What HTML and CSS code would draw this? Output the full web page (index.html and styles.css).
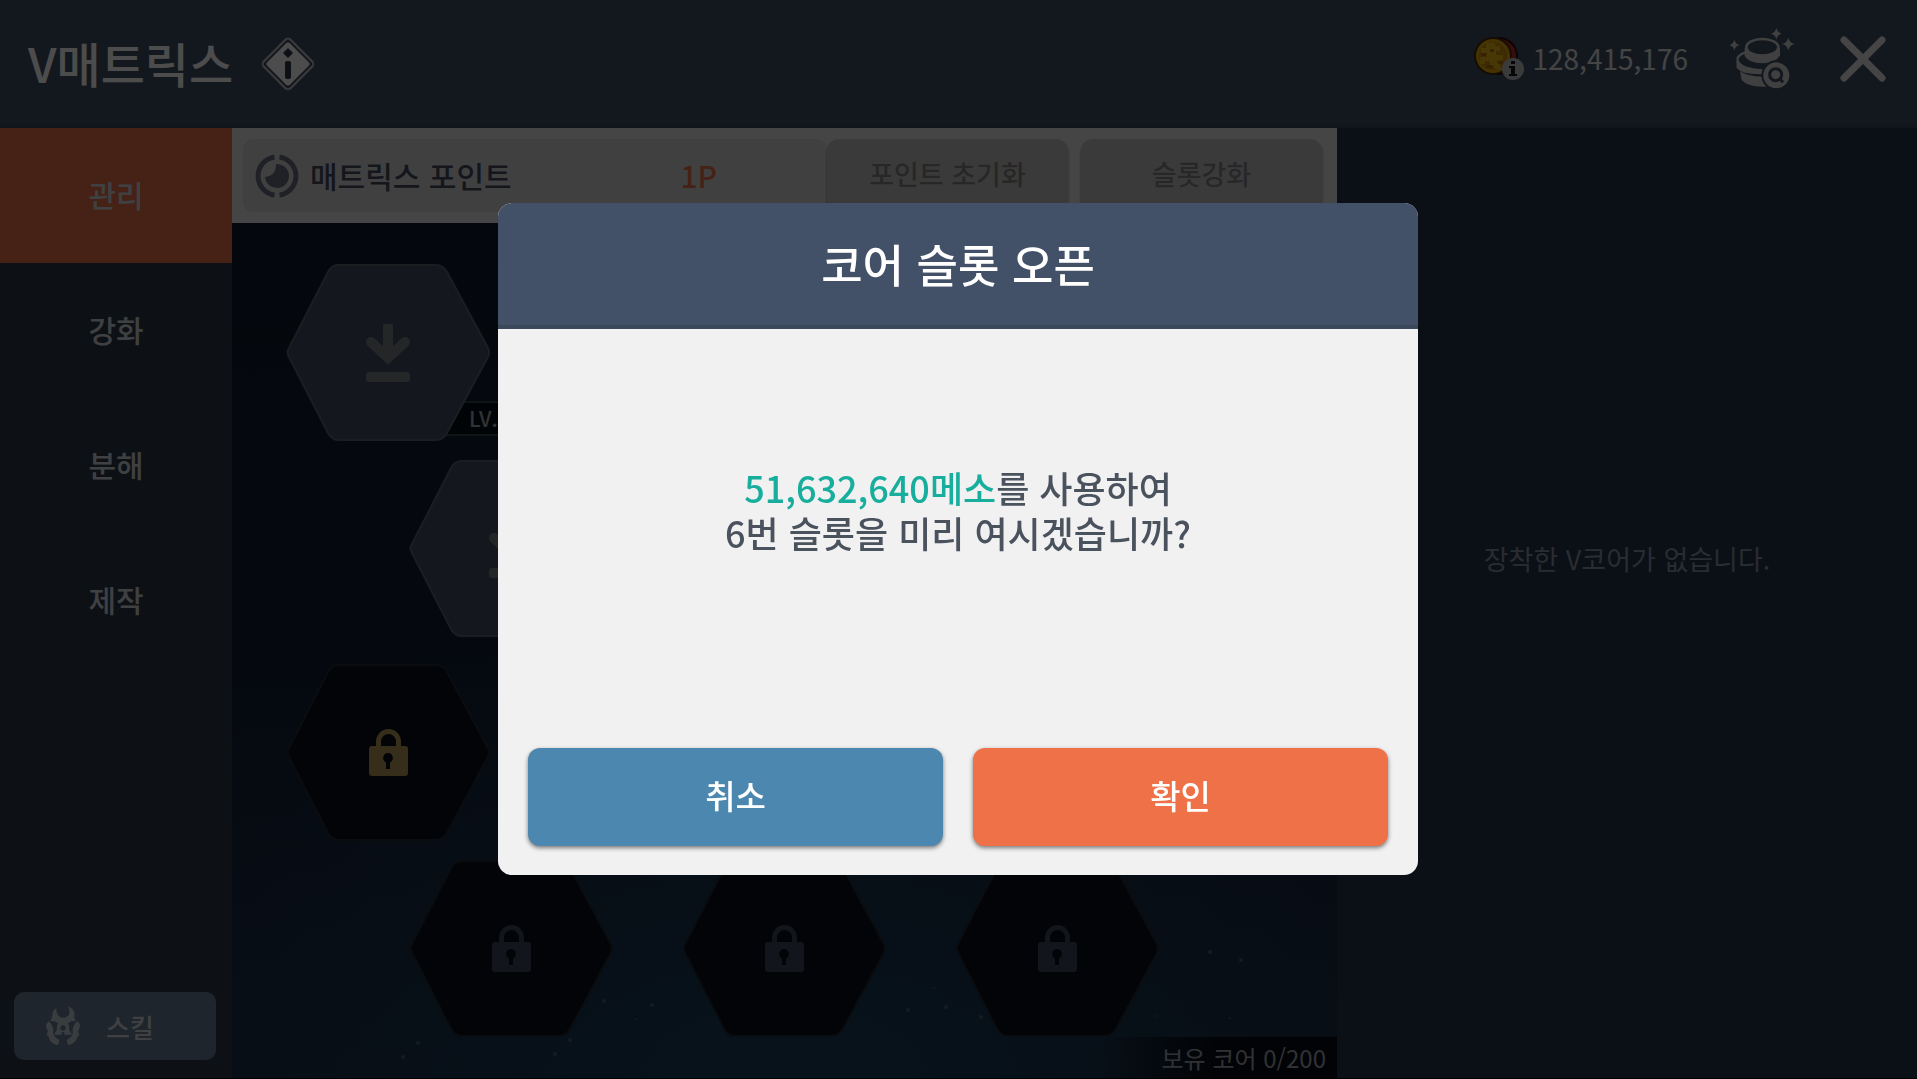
FILE: index.html
```html
<!DOCTYPE html>
<html lang="ko">
<head>
    <meta charset="UTF-8">
    <meta name="viewport" content="width=device-width, initial-scale=1.0">
    <title>V매트릭스</title>
    <link rel="stylesheet" href="styles.css">
</head>
<body>

    <!-- Shared shapes -->
    <svg class="shapes" aria-hidden="true">
        <symbol id="hex" viewBox="0 0 204 177">
            <path d="M52 1H150Q157 1 161 8L202 84Q204 88 202 93L161 169Q157 176 150 176H52Q46 176 42 169L3 93Q0 88 3 84L42 8Q46 1 52 1Z" stroke-width="2"/>
        </symbol>
        <symbol id="equip" viewBox="0 0 44 58">
            <path d="M22 0V34M5 18L22 34L39 18" fill="none" stroke="currentColor" stroke-width="10"/>
            <circle cx="5" cy="18" r="5" fill="currentColor"/>
            <circle cx="39" cy="18" r="5" fill="currentColor"/>
            <rect y="48" width="44" height="10" rx="3" fill="currentColor"/>
        </symbol>
        <symbol id="lock" viewBox="0 0 39 48">
            <path d="M9.500 19V12.500a10 10 0 0 1 20 0V19" fill="none" stroke="currentColor" stroke-width="5"/>
            <path fill="currentColor" fill-rule="evenodd" d="M3 17H36Q39 17 39 20V44Q39 47 36 47H3Q0 47 0 44V20Q0 17 3 17ZM19 24a5 5 0 0 0-2 9.500V40h4v-6.500A5 5 0 0 0 19 24Z"/>
        </symbol>
    </svg>

    <div class="app">
        <header class="topbar">
            <h1>V매트릭스</h1>
            <button class="icon-button" aria-label="정보">
                <svg width="54" height="54" viewBox="0 0 54 54">
                    <rect x="8" y="8" width="38" height="38" rx="4" transform="rotate(45 27 27)" fill="none" stroke="#c4c4c4" stroke-width="2"/>
                    <rect x="11" y="11" width="32" height="32" rx="3" transform="rotate(45 27 27)" fill="#fff"/>
                    <path d="M27 11l5 5-5 5-5-5z" fill="#2d3745"/>
                    <rect x="24" y="24" width="6" height="18" rx="2" fill="#2d3745"/>
                </svg>
            </button>
            <div class="topbar-right">
                <svg width="50" height="44" viewBox="0 0 50 44" aria-hidden="true">
                    <circle cx="25" cy="19" r="19" fill="#2a0b08"/>
                    <circle cx="25" cy="19" r="17" fill="#b92d22"/>
                    <circle cx="19" cy="19" r="19" fill="#4d2b06"/>
                    <circle cx="19" cy="19" r="17" fill="#e8ac10"/>
                    <circle cx="19" cy="19" r="14" fill="#cf8c0c"/>
                    <path d="M12 6h9v3h5v5h-4v4h7v5h-6v4h3v5h-6v-4h-4v-4h-5v3h-5v-7h7v-4h-6v-5h5z" fill="#efbd16"/>
                    <path d="M8 16h4v3h-4zM16 12h4v3h-4zM25 24h4v3h-4zM13 28h5v3h-5z" fill="#b8700a"/>
                    <circle cx="39" cy="32" r="11" fill="#c4c4c4"/>
                    <path d="M37 24h4v3h-4zM35 29h6v8h2v2h-8v-2h2v-6h-2z" fill="#15181d"/>
                </svg>
                <span class="meso">128,415,176</span>
                <button class="icon-button collection" aria-label="코어 목록">
                    <svg width="67" height="62" viewBox="864 82 201 186">
                        <g fill="#d5d5d5">
                            <path d="M880 117Q883 130 896 133Q883 136 880 149Q877 136 864 133Q877 130 880 117Z"/>
                            <path d="M1006 82Q1009 96 1022 99Q1009 102 1006 116Q1003 102 990 99Q1003 96 1006 82Z"/>
                            <path d="M1042 111Q1046 127 1061 130Q1046 133 1042 149Q1038 133 1023 130Q1038 127 1042 111Z"/>
                            <path d="M897 212Q925 230 975 228V258Q920 260 902 238Z"/>
                            <path d="M886 178Q890 203 975 206V220Q905 224 887 202Z"/>
                            <path d="M911 142H1017V164Q1003 188 964 188Q924 188 911 166Z"/>
                        </g>
                        <path d="M913 155Q886 164 890 182Q900 199 930 205" fill="none" stroke="#d5d5d5" stroke-width="7"/>
                        <ellipse cx="964" cy="140" rx="48" ry="25" fill="#425168" stroke="#d5d5d5" stroke-width="8"/>
                        <circle cx="1006" cy="224" r="42" fill="#d5d5d5" stroke="#425168" stroke-width="6"/>
                        <circle cx="1004" cy="222" r="18" fill="none" stroke="#425168" stroke-width="9"/>
                        <path d="M1014 232L1026 245" stroke="#425168" stroke-width="9"/>
                    </svg>
                </button>
                <button class="icon-button" aria-label="닫기">
                    <svg width="46" height="46" viewBox="0 0 46 46">
                        <path d="M4 4L42 42M42 4L4 42" stroke="#e8e8e8" stroke-width="7" stroke-linecap="round"/>
                    </svg>
                </button>
            </div>
        </header>

        <div class="layout">
            <nav class="sidebar">
                <button class="tab active">관리</button>
                <button class="tab">강화</button>
                <button class="tab">분해</button>
                <button class="tab">제작</button>
                <button class="skill-button">
                    <svg width="34" height="40" viewBox="0 0 102 120" fill="#c4ccd4" aria-hidden="true">
                        <path fill-rule="evenodd" d="M32 6Q18 14 19 28Q18 38 12 46Q26 42 36 52Q31 62 33 70L24 86H47V78H55V86H78L69 70Q71 62 66 52Q76 42 90 46Q82 38 86 24Q84 8 66 0Q74 16 68 28Q52 42 38 30Q28 18 32 6ZM51 58a8 8 0 1 1 0 16a8 8 0 0 1 0-16Z"/>
                        <path d="M8 46Q20 56 22 72Q18 92 40 102L36 118Q10 110 8 92L2 86L6 76L0 62Q0 52 8 46Z"/>
                        <path d="M94 46Q82 56 80 72Q84 92 62 102L66 118Q92 110 94 92L100 86L96 76L102 62Q102 52 94 46Z"/>
                    </svg>
                    스킬
                </button>
            </nav>

            <main class="board">
                <div class="points">
                    <div class="points-box">
                        <svg width="44" height="44" viewBox="0 0 44 44" aria-hidden="true">
                            <path d="M19.500 3A19.200 19.200 0 0 0 19.500 41M24.500 3A19.200 19.200 0 0 1 24.500 41" fill="none" stroke="#69707f" stroke-width="5"/>
                            <path d="M21 10A12 12 0 1 1 10 23Q21 22 21 10Z" fill="#69707f"/>
                        </svg>
                        <span>매트릭스 포인트</span>
                        <strong>1P</strong>
                    </div>
                    <button class="point-button" disabled>포인트 초기화</button>
                    <button class="point-button" disabled>슬롯강화</button>
                </div>

                <div class="slots">
                    <svg class="stars" viewBox="0 0 1105 855" preserveAspectRatio="none" aria-hidden="true">
                        <circle cx="186" cy="820" r="2"/>
                        <circle cx="171" cy="834" r="2"/>
                        <circle cx="372" cy="778" r="2"/>
                        <circle cx="338" cy="817" r="2"/>
                        <circle cx="323" cy="831" r="2"/>
                        <circle cx="404" cy="796" r="1"/>
                        <circle cx="420" cy="782" r="2"/>
                        <circle cx="676" cy="787" r="2"/>
                        <circle cx="702" cy="765" r="1"/>
                        <circle cx="714" cy="784" r="2"/>
                        <circle cx="749" cy="794" r="2"/>
                        <circle cx="978" cy="729" r="2"/>
                        <circle cx="1009" cy="737" r="2"/>
                        <circle cx="923" cy="793" r="1"/>
                        <circle cx="998" cy="795" r="1"/>
                    </svg>
                    <div class="slot-group">
                        <div class="slot-row">
                            <button class="slot" aria-label="1번 슬롯">
                                <span class="level">LV.</span>
                                <svg class="hex"><use href="#hex"/></svg>
                                <svg class="equip"><use href="#equip"/></svg>
                            </button>
                        </div>
                        <div class="slot-row shifted">
                            <button class="slot" aria-label="5번 슬롯">
                                <svg class="hex"><use href="#hex"/></svg>
                                <svg class="equip"><use href="#equip"/></svg>
                            </button>
                        </div>
                    </div>
                    <div class="slot-group">
                        <div class="slot-row">
                            <button class="slot locked next" aria-label="잠긴 슬롯">
                                <svg class="hex"><use href="#hex"/></svg>
                                <svg class="lock"><use href="#lock"/></svg>
                            </button>
                        </div>
                        <div class="slot-row shifted">
                            <button class="slot locked" aria-label="잠긴 슬롯">
                                <svg class="hex"><use href="#hex"/></svg>
                                <svg class="lock"><use href="#lock"/></svg>
                            </button>
                            <button class="slot locked" aria-label="잠긴 슬롯">
                                <svg class="hex"><use href="#hex"/></svg>
                                <svg class="lock"><use href="#lock"/></svg>
                            </button>
                            <button class="slot locked" aria-label="잠긴 슬롯">
                                <svg class="hex"><use href="#hex"/></svg>
                                <svg class="lock"><use href="#lock"/></svg>
                            </button>
                        </div>
                    </div>
                    <div class="core-count">보유 코어 0/200</div>
                </div>
            </main>

            <aside class="detail">
                <p>장착한 V코어가 없습니다.</p>
            </aside>
        </div>
    </div>

    <!-- Slot Open Modal -->
    <div class="backdrop">
        <div class="modal" role="dialog" aria-modal="true" aria-labelledby="modal-title">
            <h2 id="modal-title">코어 슬롯 오픈</h2>
            <p class="modal-text"><span class="price">51,632,640메소</span>를 사용하여<br>6번 슬롯을 미리 여시겠습니까?</p>
            <div class="modal-buttons">
                <button class="cancel">취소</button>
                <button class="confirm">확인</button>
            </div>
        </div>
    </div>

</body>
</html>
```

FILE: styles.css
```css
* { box-sizing: border-box; }

body {
    margin: 0;
    font-family: "Noto Sans CJK KR", "Noto Sans", sans-serif;
    font-weight: 500;
    color: #fff;
    background-color: #000;
}

h1, h2, p { margin: 0; }

button {
    padding: 0;
    border: none;
    background: none;
    font: inherit;
    color: inherit;
    cursor: pointer;
}

svg { display: block; }

.shapes {
    position: absolute;
    width: 0;
    height: 0;
}

.app {
    display: flex;
    flex-direction: column;
    min-height: 100vh;
    border-bottom: 1px solid #000;
}

/* Top bar */
.topbar {
    display: flex;
    align-items: center;
    height: 128px;
    padding: 0 31px 0 28px;
    background: linear-gradient(#425168 94%, #3a465a);
}

.topbar h1 {
    margin-right: 28px;
    padding-bottom: 5px;
    font-size: 48px;
    font-weight: 500;
    line-height: 64px;
}

.topbar-right {
    display: flex;
    align-items: center;
    margin-left: auto;
    padding-bottom: 10px;
}

.meso {
    margin-left: 9px;
    padding-bottom: 2px;
    font-size: 28px;
    font-weight: 400;
    color: #e4e4e4;
}

.collection { margin: 0 44px 0 41px; }

/* Columns */
.layout {
    flex: 1;
    display: flex;
}

.sidebar {
    display: flex;
    flex-direction: column;
    width: 232px;
    padding-bottom: 18px;
    background-color: #2c3745;
}

.tab {
    height: 135px;
    padding-bottom: 4px;
    font-size: 30px;
    color: #d4d8dd;
}

.tab.active { background-color: #e8714a; }

.skill-button {
    display: flex;
    align-items: center;
    gap: 26px;
    height: 68px;
    margin: auto 16px 0 14px;
    padding-left: 32px;
    border-radius: 10px;
    font-size: 26px;
    color: #d4d8dd;
    background-color: #677c94;
}

.board {
    flex: 1;
    display: flex;
    flex-direction: column;
}

.detail {
    display: flex;
    align-items: center;
    justify-content: center;
    width: 580px;
    padding-bottom: 90px;
    font-size: 27px;
    font-weight: 400;
    color: #8a93a3;
    background-color: #26344c;
}

/* Matrix points */
.points {
    display: flex;
    height: 95px;
    padding: 11px 15px 11px 11px;
    background-color: #e8e8e8;
}

.points-box {
    flex: 1;
    display: flex;
    align-items: center;
    gap: 11px;
    padding-left: 12px;
    border-radius: 10px;
    font-size: 30px;
    color: #434c5e;
    background-color: #d8d8d8;
}

.points-box span, .points-box strong { padding-bottom: 2px; }

.points-box strong {
    margin: 0 110px 0 auto;
    font-weight: 500;
    color: #e8714a;
}

.point-button {
    width: 241px;
    padding-bottom: 4px;
    border-radius: 12px;
    font-size: 27px;
    color: #848484;
    background-color: #c4c4c4;
    box-shadow: 0 2px 3px rgba(0, 0, 0, 0.4);
}

.point-button + .point-button { margin-left: 13px; }

/* Core slots */
.slots {
    position: relative;
    flex: 1;
    display: flex;
    flex-direction: column;
    gap: 27px;
    padding-top: 41px;
    background: radial-gradient(ellipse 75% 55% at 50% 100%, #19405c, rgba(26, 56, 84, 0.500) 55%, transparent), linear-gradient(#101a2c, #121e34 50%, #1c2c46);
}

.stars {
    position: absolute;
    top: 0;
    left: 0;
    width: 100%;
    height: 100%;
    fill: #46606f;
}

.slot-group {
    position: relative;
    display: flex;
    flex-direction: column;
    gap: 19px;
    padding-left: 54px;
}

.slot-row {
    display: flex;
    gap: 69px;
}

.slot-row.shifted { padding-left: 123px; }

.slot {
    position: relative;
    display: grid;
    place-items: center;
    width: 204px;
    height: 177px;
    color: #7a7f86;
}

.slot > svg { grid-area: 1 / 1; position: relative; }

.hex {
    width: 204px;
    height: 177px;
    fill: #434e62;
    stroke: #5c656f;
}

.equip {
    width: 44px;
    height: 58px;
}

.lock {
    width: 39px;
    height: 48px;
}

.slot.locked { color: #3c475a; }
.slot.locked.next { color: #b4985a; }

.locked .hex {
    fill: #080f18;
    stroke: #242c35;
}

.level {
    position: absolute;
    left: 150px;
    bottom: 5px;
    width: 100px;
    padding-left: 31px;
    border: 2px solid #344648;
    font-size: 21px;
    line-height: 31px;
    text-align: left;
    color: #a4a9ad;
    background-color: #030e14;
}

.core-count {
    position: relative;
    width: 240px;
    margin: auto 0 0 auto;
    margin-top: -27px;
    padding-right: 11px;
    font-size: 24px;
    font-weight: 400;
    line-height: 41px;
    text-align: right;
    color: #a0a6ad;
    background: linear-gradient(to right, transparent, #080c14 50%);
}

/* Modal */
.backdrop {
    position: fixed;
    top: 0; left: 0;
    width: 100%; height: 100%;
    display: flex;
    justify-content: center;
    align-items: center;
    padding: 0 1px 2px 0;
    background-color: rgba(0, 0, 0, 0.7);
}

.modal {
    display: flex;
    flex-direction: column;
    width: 920px;
    min-height: 672px;
    border-radius: 14px;
    overflow: hidden;
    background-color: #f1f1f1;
}

.modal h2 {
    padding: 29px 0;
    border-bottom: 4px solid #3b485a;
    font-size: 45px;
    font-weight: 500;
    line-height: 64px;
    text-align: center;
    background-color: #425168;
}

.modal-text {
    margin-top: 136px;
    font-size: 36px;
    line-height: 45px;
    text-align: center;
    color: #4a525e;
}

.price { color: #17ae9d; }

.modal-buttons {
    display: flex;
    gap: 30px;
    margin-top: auto;
    padding: 0 30px 29px;
}

.modal-buttons button {
    flex: 1;
    height: 98px;
    padding-bottom: 3px;
    border-radius: 12px;
    font-size: 33px;
    box-shadow: 0 2px 4px rgba(0, 0, 0, 0.5);
}

.cancel { background-color: #4c87af; }
.confirm { background-color: #ee7147; }
```
